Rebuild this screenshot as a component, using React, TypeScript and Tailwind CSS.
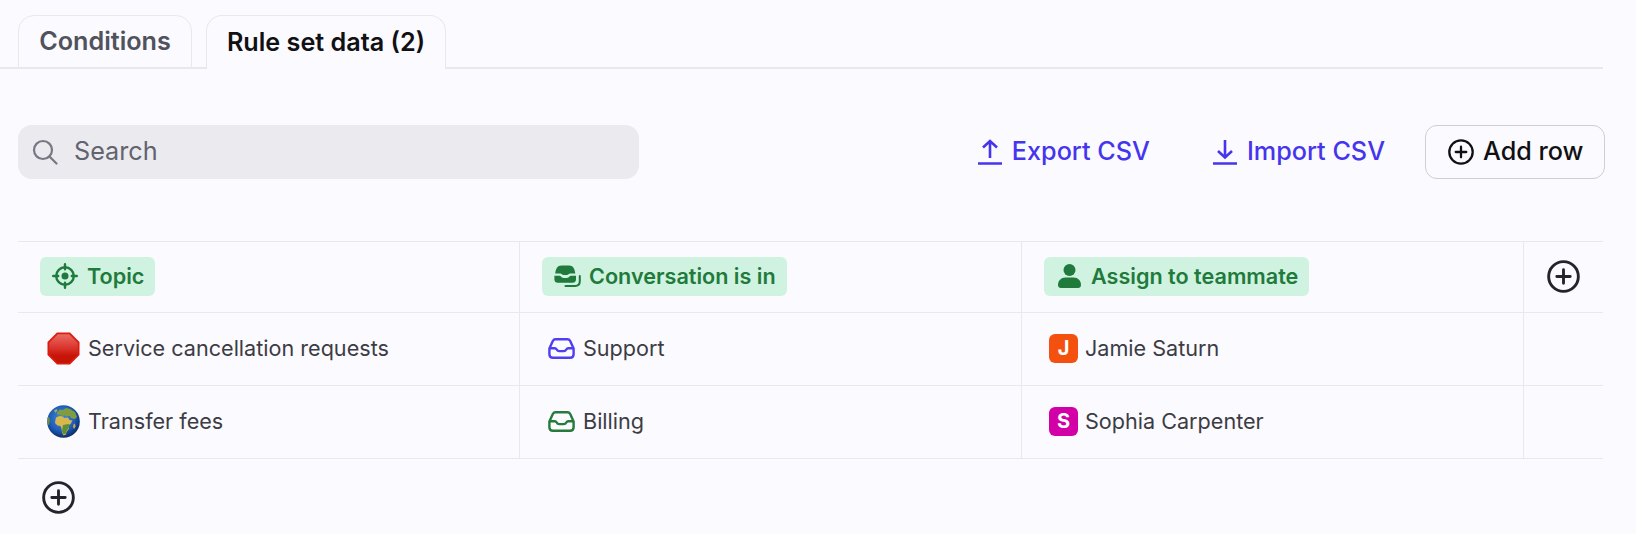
function PlusCircle({ className }: { className: string }) {
  return (
    <svg viewBox="0 0 32 32" fill="none" stroke="currentColor" strokeWidth="2.800" strokeLinecap="round" className={className}>
      <circle cx="16" cy="16" r="14.400" />
      <path d="M16 9.500v13M9.500 16h13" />
    </svg>
  );
}

function InboxOutline({ className }: { className: string }) {
  return (
    <svg viewBox="0 0 27 21" fill="none" stroke="currentColor" strokeWidth="2.400" strokeLinejoin="round" className={className}>
      <path d="M1.400 10.500 4.800 3C5.400 1.800 6.300 1.200 7.600 1.200h11.800c1.300 0 2.200.6 2.800 1.800l3.400 7.500v5.700c0 2-1.400 3.500-3.500 3.500H4.900c-2.100 0-3.500-1.500-3.500-3.500v-5.700Z" />
      <path d="M1.400 10.200h5.300c1 0 1.500.4 2 1.300.6 1.100 1.300 1.600 2.500 1.600h4.600c1.200 0 1.900-.5 2.500-1.600.5-.9 1-1.300 2-1.300h5.300" />
    </svg>
  );
}

function TargetIcon() {
  return (
    <svg viewBox="0 0 26 26" fill="none" stroke="currentColor" strokeWidth="2.400" strokeLinecap="round" className="h-[26px] w-[26px]">
      <circle cx="13" cy="13" r="8.800" />
      <circle cx="13" cy="13" r="3.500" fill="currentColor" stroke="none" />
      <path d="M13 1.200v5M13 19.800v5M1.200 13h5M19.800 13h5" />
    </svg>
  );
}

function StackedInbox() {
  return (
    <svg viewBox="0 0 27 22" className="h-[22px] w-[27px]" fill="none">
      <path d="M1.200 8.500C1.800 3.800 3.300.4 7.500.4h7.500c4.200 0 5.700 3.400 6.300 8.100h-5.100c-.8 0-1.200.2-1.600.8-.4.500-1 .8-1.800.8H9.700c-.8 0-1.400-.3-1.800-.8-.4-.6-.8-.8-1.600-.8H1.200Z" fill="currentColor" />
      <path d="M.4 10.800h5c.7 0 1.100.2 1.500.8.600.9 1.500 1.300 2.800 1.300h3c1.300 0 2.200-.4 2.800-1.300.4-.6.8-.8 1.500-.8h5v3.600c0 2-1.400 3.300-3.300 3.300H3.700C1.800 17.700.4 16.400.4 14.400v-3.600Z" fill="currentColor" />
      <path d="M25.800 11v5.300c0 2.900-1.900 4.700-4.700 4.700H11.500" stroke="currentColor" strokeWidth="2" strokeLinecap="round" />
    </svg>
  );
}

function PersonIcon() {
  return (
    <svg viewBox="0 0 23 24" className="h-[24px] w-[23px]" fill="currentColor">
      <circle cx="11.500" cy="6" r="6" />
      <path d="M0 21c0-4.300 3-7.500 7.500-7.500h8c4.500 0 7.500 3.200 7.500 7.500 0 1.900-1.200 3-3 3H3c-1.800 0-3-1.100-3-3Z" />
    </svg>
  );
}

function StopSign() {
  return (
    <svg viewBox="0 0 33 33" className="h-[33px] w-[33px] shrink-0">
      <defs>
        <linearGradient id="stopFill" x1="0" y1="0" x2="0" y2="1">
          <stop offset="0" stopColor="#ea6a62" />
          <stop offset="0.5" stopColor="#d9322a" />
          <stop offset="0.75" stopColor="#c91508" />
          <stop offset="1" stopColor="#c21204" />
        </linearGradient>
      </defs>
      <polygon points="10,0.500 23,0.500 32.500,10 32.500,23 23,32.500 10,32.500 0.500,23 0.500,10" fill="#dc1c10" />
      <polygon points="10.800,2.300 22.200,2.300 30.700,10.800 30.700,22.200 22.200,30.700 10.800,30.700 2.300,22.200 2.300,10.800" fill="url(#stopFill)" />
    </svg>
  );
}

function Globe() {
  return (
    <svg viewBox="0 0 33 33" className="h-[33px] w-[33px] shrink-0">
      <defs>
        <radialGradient id="sea" cx="0.45" cy="0.4" r="0.65">
          <stop offset="0" stopColor="#3f8ee0" />
          <stop offset="0.6" stopColor="#1f5cb8" />
          <stop offset="1" stopColor="#081f58" />
        </radialGradient>
        <clipPath id="globeClip">
          <circle cx="16.500" cy="16.500" r="16.300" />
        </clipPath>
      </defs>
      <circle cx="16.500" cy="16.500" r="16.300" fill="url(#sea)" />
      <g clipPath="url(#globeClip)">
        <path d="M10 7.500l3-3 3 .5 3-2 4 1 5 3 2 5-2 2-3.500-.5-2-2.500-3 .5-1.500-1-3 .5-2.500-1.500-2 .5-.500-2Z" fill="#7f9c3f" />
        <path d="M7 5.500l2.500-1.500 1 1.500L8.500 8 7 5.500Z" fill="#9ab05a" />
        <path d="M9 12.500l3.500-1.500 3.500.5 1 1.500 4-.5 1.500 2.500 3 .5-2 3.500-2 1.500.5 3-2.500 3.500-.5 2.500-2.500 1-1.500-3-.5-4-1-2.500-3-.5-2.500-2.500.5-3 .500-2.500Z" fill="#d8b84e" />
        <path d="M16 20l5.500-1 1 .5-.5 3-2.500 3.500-.5 2.500-2.500 1-1.500-3 .5-3.500.500-3Z" fill="#5e8f36" />
        <path d="M26.500 19.500l1.500-1 .5 3-1.500 2.500-1-2 .5-2.500Z" fill="#c4ad50" />
        <path d="M0 12h2l1 3-1 5-2-1v-7Z" fill="#6b8f3a" />
      </g>
    </svg>
  );
}

function Badge({ icon, label, pad, gap }: { icon: React.ReactNode; label: string; pad: string; gap: string }) {
  return (
    <span className={`inline-flex h-[39px] items-center rounded-[6px] bg-[#cff3e0] pr-[11px] text-[21.6px] font-semibold text-[#1f7a3c] ${pad} ${gap}`}>
      {icon}
      {label}
    </span>
  );
}

function Avatar({ letter, color }: { letter: string; color: string }) {
  return (
    <span className={`flex h-[29px] w-[29px] items-center justify-center rounded-[6px] text-[20px] font-bold text-white ${color}`}>
      {letter}
    </span>
  );
}

const cell = "flex items-center border-b border-r border-[#e9e8ee] pb-[2px]";

export default function App() {
  return (
    <div className="h-screen overflow-hidden bg-[#fbfaff] font-['Inter',sans-serif] text-[21.6px] text-[#3c3c44]">
      <div className="flex w-[1603px] gap-[14px] border-b-2 border-[#e9e8ee] pl-[18px] pt-[15px]">
        <div className="-mb-px flex h-[53px] w-[174px] items-center justify-center rounded-t-[16px] border border-[#e9e8ee] text-[25.2px] font-semibold text-[#50525c]">
          Conditions
        </div>
        <div className="-mb-0.5 flex h-[54px] w-[240px] items-center justify-center rounded-t-[16px] border border-b-0 border-[#e9e8ee] bg-[#fbfaff] text-[25.2px] font-semibold text-[#111114]">
          Rule set data (2)
        </div>
      </div>

      <div className="ml-[18px] mt-[56px] flex w-[1587px] items-center">
        <div className="flex h-[54px] w-[621px] items-center gap-[16px] rounded-[14px] bg-[#ebeaef] pl-[14px] text-[#62636f]">
          <svg viewBox="0 0 26 26" fill="none" stroke="#777884" strokeWidth="2.200" strokeLinecap="round" className="h-[26px] w-[26px]">
            <circle cx="11" cy="11" r="9" />
            <path d="m17.500 17.500 7 7" />
          </svg>
          <span className="text-[25.2px]">Search</span>
        </div>
        <div className="ml-auto flex items-center text-[25.2px] font-medium text-[#4535ee]">
          <div className="flex items-center gap-[10px]">
            <svg viewBox="0 0 24 26" fill="none" stroke="currentColor" strokeWidth="2.600" className="h-[26px] w-[24px]">
              <path d="M12 19V2M5 8.500 12 2l7 6.500M0 24.500h24" />
            </svg>
            Export CSV
          </div>
          <div className="ml-[63px] flex items-center gap-[10px]">
            <svg viewBox="0 0 24 26" fill="none" stroke="currentColor" strokeWidth="2.600" className="h-[26px] w-[24px]">
              <path d="M12 1v17M5 12l7 6.500 7-6.500M0 24.500h24" />
            </svg>
            Import CSV
          </div>
          <button className="ml-[40px] flex h-[54px] w-[180px] items-center gap-[9px] rounded-[12px] border border-[#cfced6] pl-[22px] text-[#111114]">
            <PlusCircle className="h-[26px] w-[26px]" />
            Add row
          </button>
        </div>
      </div>

      <div className="ml-[18px] mt-[62px] grid w-[1585px] grid-cols-[502px_502px_502px_79px] grid-rows-[71px_73px_73px] border-t border-[#e9e8ee]">
        <div className={`${cell} pl-[22px]`}>
          <Badge icon={<TargetIcon />} label="Topic" pad="pl-[12px]" gap="gap-[9px]" />
        </div>
        <div className={`${cell} pl-[22px]`}>
          <Badge icon={<StackedInbox />} label="Conversation is in" pad="pl-[12px]" gap="gap-[8px]" />
        </div>
        <div className={`${cell} pl-[22px]`}>
          <Badge icon={<PersonIcon />} label="Assign to teammate" pad="pl-[14px]" gap="gap-[10px]" />
        </div>
        <div className="flex items-center justify-center border-b border-[#e9e8ee] pb-[2px] text-[#25242d]">
          <PlusCircle className="h-[33px] w-[33px]" />
        </div>

        <div className={`${cell} gap-[8px] pl-[29px]`}>
          <StopSign />
          Service cancellation requests
        </div>
        <div className={`${cell} gap-[8px] pl-[28px]`}>
          <InboxOutline className="h-[21px] w-[27px] text-[#4f3ff0]" />
          Support
        </div>
        <div className={`${cell} gap-[7px] pl-[27px]`}>
          <Avatar letter="J" color="bg-[#f4500f]" />
          Jamie Saturn
        </div>
        <div className="border-b border-[#e9e8ee]" />

        <div className={`${cell} gap-[8px] pl-[29px]`}>
          <Globe />
          Transfer fees
        </div>
        <div className={`${cell} gap-[8px] pl-[28px]`}>
          <InboxOutline className="h-[21px] w-[27px] text-[#267a3a]" />
          Billing
        </div>
        <div className={`${cell} gap-[7px] pl-[27px]`}>
          <Avatar letter="S" color="bg-[#d300a8]" />
          Sophia Carpenter
        </div>
        <div className="border-b border-[#e9e8ee]" />
      </div>

      <div className="ml-[42px] mt-[22px] text-[#25242d]">
        <PlusCircle className="h-[33px] w-[33px]" />
      </div>
    </div>
  );
}
